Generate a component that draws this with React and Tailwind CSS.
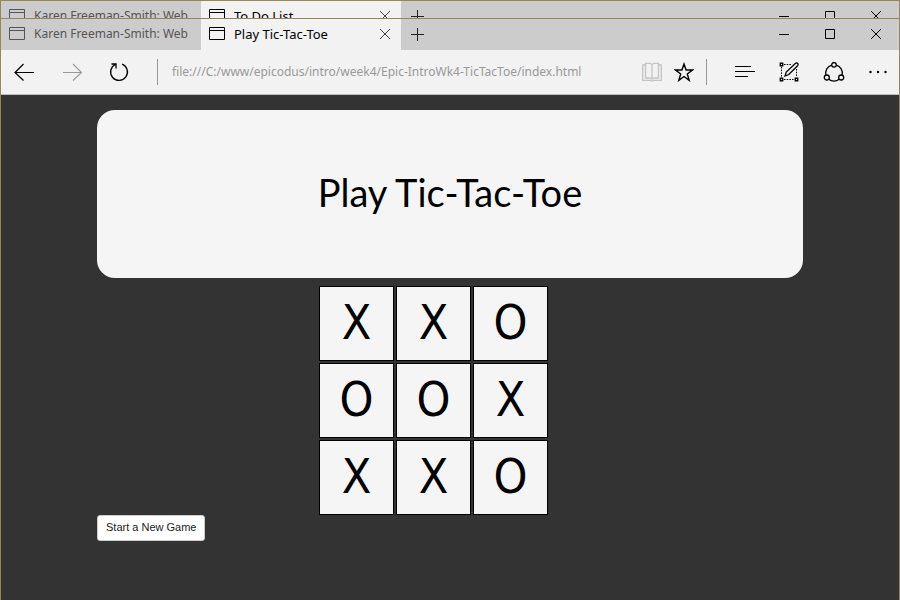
import React from "react";

const cells = ["X", "X", "O", "O", "O", "X", "X", "X", "O"];

function WindowIcon() {
  return (
    <svg className="shrink-0" width="16" height="13" viewBox="0 0 16 13" fill="none" stroke="currentColor" aria-hidden="true">
      <path d="M.5.5h15v12H.5zM.5 3.5h15" />
    </svg>
  );
}

function CrossIcon() {
  return (
    <svg width="12" height="12" viewBox="0 0 12 12" fill="none" stroke="currentColor" aria-hidden="true">
      <path d="M1 1l10 10M11 1L1 11" />
    </svg>
  );
}

function TitleBar({ title }) {
  return (
    <div className="flex h-[31px] items-center bg-[#cccccc] text-black">
      <div className="flex h-full w-50 items-center gap-[9px] overflow-hidden px-2 pb-0.5 text-[#555555]">
        <WindowIcon />
        <span className="whitespace-nowrap text-[12px] leading-5">Karen Freeman-Smith: Web</span>
      </div>
      <div className="flex h-full w-50 items-center gap-[9px] bg-[#f2f2f2] px-2 pb-0.5">
        <WindowIcon />
        <span className="flex-1 whitespace-nowrap text-[13px] leading-5">{title}</span>
        <button type="button" aria-label="Close tab" className="mr-0.5 text-[#444444]">
          <CrossIcon />
        </button>
      </div>
      <button type="button" aria-label="New tab" className="ml-2.5 text-[#222222]">
        <svg width="13" height="13" viewBox="0 0 13 13" fill="none" stroke="currentColor" aria-hidden="true">
          <path d="M0 6.5h13M6.5 0v13" />
        </svg>
      </button>
      <div className="ml-auto flex items-center gap-[34px] pb-0.5 pr-[17px]">
        <button type="button" aria-label="Minimize">
          <svg width="12" height="12" viewBox="0 0 12 12" fill="none" stroke="currentColor" aria-hidden="true">
            <path d="M1 6.5h10" />
          </svg>
        </button>
        <button type="button" aria-label="Maximize">
          <svg width="12" height="12" viewBox="0 0 12 12" fill="none" stroke="currentColor" aria-hidden="true">
            <path d="M1.5 1.5h9v9h-9z" />
          </svg>
        </button>
        <button type="button" aria-label="Close window">
          <CrossIcon />
        </button>
      </div>
    </div>
  );
}

function NavBar() {
  return (
    <div className="flex h-[45px] items-center border-b border-[#bcc0c0] bg-[#f2f2f2] pl-3 pr-[11px] text-black">
      <button type="button" aria-label="Back">
        <svg width="21" height="18" viewBox="0 0 21 18" fill="none" stroke="currentColor" strokeWidth="1.2" aria-hidden="true">
          <path d="M21 9.500H2M10.500 1L2 9.500l8.500 8" />
        </svg>
      </button>
      <button type="button" aria-label="Forward" className="ml-[27px] text-[#999999]">
        <svg width="21" height="18" viewBox="0 0 21 18" fill="none" stroke="currentColor" strokeWidth="1.1" aria-hidden="true">
          <path d="M2 9.500h18.500M12 1l8.500 8.500-8.500 8" />
        </svg>
      </button>
      <button type="button" aria-label="Refresh" className="ml-[27px]">
        <svg width="20" height="20" viewBox="0 0 20 20" fill="none" stroke="currentColor" strokeWidth="1.3" aria-hidden="true">
          <path d="M13.200 2.200A8.400 8.400 0 1 1 6.200 2.500M2.500 2h4.500v4.500" />
        </svg>
      </button>
      <div className="ml-7 h-[26px] w-px bg-[#999999]" />
      <input
        aria-label="Address"
        className="ml-3.5 min-w-0 flex-1 bg-transparent text-[12px] leading-5 text-[#999999] outline-none"
        defaultValue="file:///C:/www/epicodus/intro/week4/Epic-IntroWk4-TicTacToe/index.html"
      />
      <button type="button" aria-label="Reading view" className="text-[#c4c4c4]">
        <svg width="20" height="20" viewBox="0 0 20 20" fill="none" stroke="currentColor" strokeWidth="1.3" aria-hidden="true">
          <path d="M3.500 3H.7v15.300h7.800l1.500.7 1.500-.7h7.800V3h-2.800M10 2.500v14.500M3.500 1.300h4.500L10 2.500l2-1.200h4.500v14.700H12l-2 1-2-1H3.500z" />
        </svg>
      </button>
      <button type="button" aria-label="Add to favorites" className="ml-3">
        <svg width="20" height="20" viewBox="0 0 20 20" fill="none" stroke="currentColor" strokeWidth="1.4" aria-hidden="true">
          <path d="M10 2l2.100 6h6.300l-5.100 3.900 1.900 6.500-5.200-3.900-5.200 3.900 1.900-6.500L1.600 8h6.300z" />
        </svg>
      </button>
      <div className="ml-3 h-[26px] w-px bg-[#999999]" />
      <button type="button" aria-label="Hub" className="ml-7">
        <svg width="20" height="20" viewBox="0 0 20 20" fill="none" stroke="currentColor" aria-hidden="true">
          <path d="M0 4.500h16M0 9.500h20M0 14.500h13" />
        </svg>
      </button>
      <button type="button" aria-label="Make a web note" className="ml-6">
        <svg width="20" height="20" viewBox="0 0 20 20" fill="none" stroke="currentColor" aria-hidden="true">
          <path d="M5 2.500h8M2.500 5v10M17.500 7v8M5 17.500h10" strokeDasharray="1.5 1.2" />
          <path d="M1.300 1.300h2.400v2.400H1.300zM1.300 16.300h2.400v2.400H1.300zM16.300 16.300h2.400v2.400h-2.400z" strokeWidth="1.4" />
          <path d="M6 14l1.300-4L16.500 1.300q1.300-.7 2.200.2.800 1-.1 2.200L9.800 12.500z" strokeWidth="1.3" />
        </svg>
      </button>
      <button type="button" aria-label="Share" className="ml-6">
        <svg width="22" height="20" viewBox="0 0 22 20" fill="none" stroke="currentColor" strokeWidth="1.3" aria-hidden="true">
          <circle cx="11" cy="2.8" r="2.3" />
          <circle cx="3.800" cy="15.5" r="2.5" />
          <circle cx="18.200" cy="15.5" r="2.5" />
          <path d="M8.700 3.200A8.200 8.200 0 0 0 2.900 13M13.300 3.200A8.200 8.200 0 0 1 19.100 13M5.800 17.200a8.200 8.200 0 0 0 10.400 0" />
        </svg>
      </button>
      <button type="button" aria-label="More actions" className="ml-6">
        <svg width="19" height="4" viewBox="0 0 19 4" fill="currentColor" aria-hidden="true">
          <circle cx="1.5" cy="2" r="1.2" />
          <circle cx="9" cy="2" r="1.2" />
          <circle cx="16.5" cy="2" r="1.2" />
        </svg>
      </button>
    </div>
  );
}

export default function App() {
  return (
    <div className="flex min-h-screen flex-col border-x border-[#94875a] bg-[#333333] font-['Noto_Sans','Open_Sans',sans-serif]">
      <div className="h-[18px] overflow-hidden border-t border-[#94875a]">
        <TitleBar title="To Do List" />
      </div>
      <div className="border-t border-[#94875a]">
        <TitleBar title="Play Tic-Tac-Toe" />
        <NavBar />
      </div>
      <main className="px-24 pt-[15px] font-['Lato',sans-serif] text-black">
        <header className="flex h-42 items-center justify-center rounded-[18px] bg-[#f5f5f5] pb-1">
          <h1 className="text-[38px] leading-10">Play Tic-Tac-Toe</h1>
        </header>
        <div className="ml-[222px] mt-2 grid w-fit grid-cols-3 gap-0.5">
          {cells.map((mark, i) => (
            <button
              key={i}
              type="button"
              className="flex size-[75px] items-center justify-center border border-black bg-[#f5f5f5] pb-1 font-['Liberation_Sans_Narrow','DejaVu_Sans_Condensed','Lato',sans-serif] text-5xl"
            >
              {mark}
            </button>
          ))}
        </div>
        <button
          type="button"
          className="block h-[26px] rounded-[3px] border border-[#cccccc] bg-white px-2 pb-0.5 font-['Liberation_Sans',sans-serif] text-[11px] leading-4 text-[#222222]"
        >
          Start a New Game
        </button>
      </main>
    </div>
  );
}
